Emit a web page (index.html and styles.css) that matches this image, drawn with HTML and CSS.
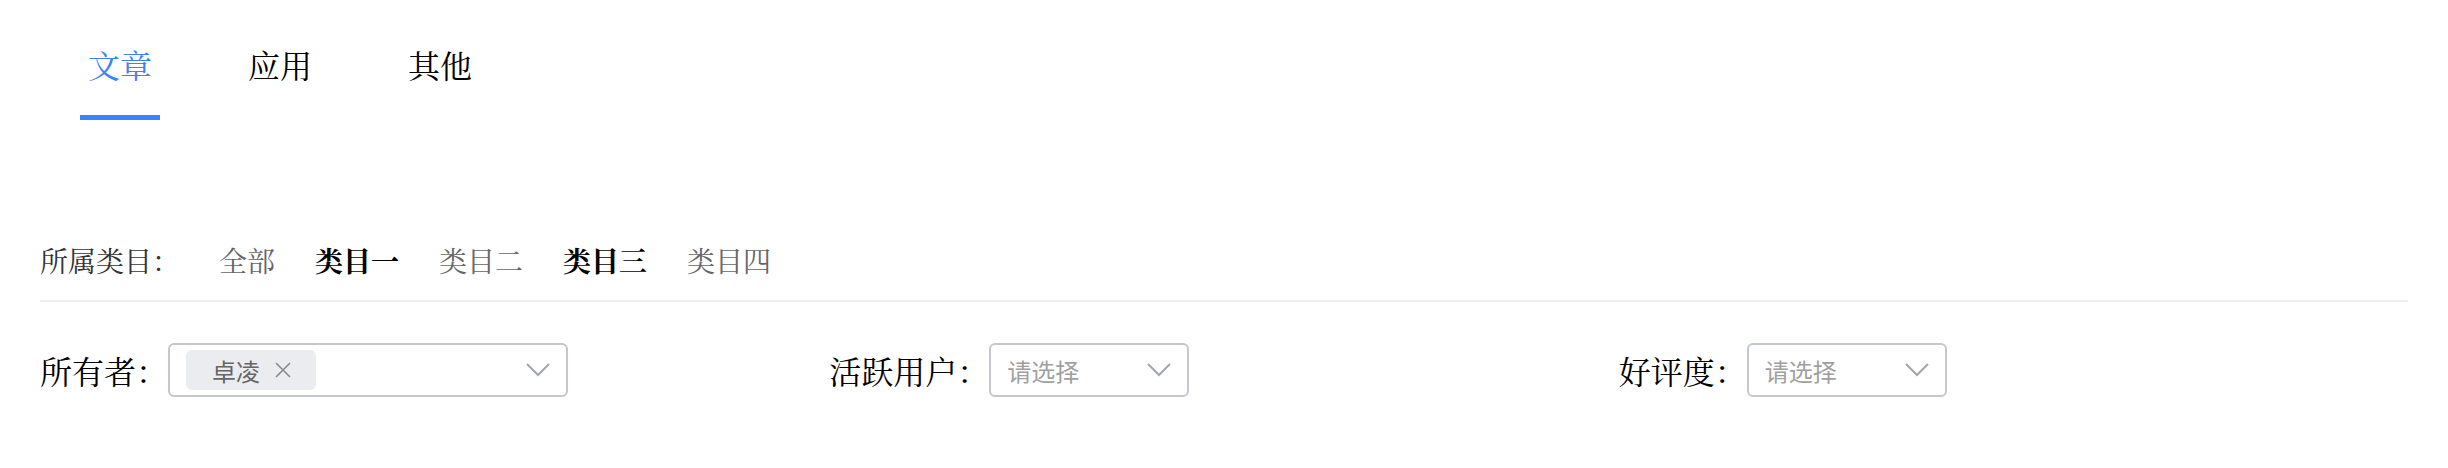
FILE: index.html
```html
<!DOCTYPE html>
<html lang="zh-CN">
<head>
<meta charset="utf-8">
<link rel="stylesheet" href="styles.css">
</head>
<body>
<div class="page">
  <nav class="tabs">
    <div class="tab active"><span class="tab-text">文章</span><span class="tab-bar"></span></div>
    <div class="tab"><span class="tab-text">应用</span><span class="tab-bar"></span></div>
    <div class="tab"><span class="tab-text">其他</span><span class="tab-bar"></span></div>
  </nav>

  <div class="category-row">
    <span class="cat-label">所属类目：</span>
    <span class="cat-item">全部</span>
    <span class="cat-item selected">类目一</span>
    <span class="cat-item">类目二</span>
    <span class="cat-item selected">类目三</span>
    <span class="cat-item">类目四</span>
  </div>

  <div class="form-row">
    <div class="field">
      <span class="field-label">所有者：</span>
      <div class="select wide">
        <span class="tag">卓凌<svg class="tag-close" viewBox="0 0 18 18" width="18" height="18"><path d="M2 2 L16 16 M16 2 L2 16" stroke="#8a8a8a" stroke-width="1.6" fill="none"/></svg></span>
        <svg class="chev" viewBox="0 0 24 14" width="24" height="14"><polyline points="1,1 12,12 23,1" stroke="#a3a6ad" stroke-width="2" fill="none"/></svg>
      </div>
    </div>
    <div class="field">
      <span class="field-label">活跃用户：</span>
      <div class="select narrow">
        <span class="placeholder">请选择</span>
        <svg class="chev" viewBox="0 0 24 14" width="24" height="14"><polyline points="1,1 12,12 23,1" stroke="#a3a6ad" stroke-width="2" fill="none"/></svg>
      </div>
    </div>
    <div class="field">
      <span class="field-label">好评度：</span>
      <div class="select narrow">
        <span class="placeholder">请选择</span>
        <svg class="chev" viewBox="0 0 24 14" width="24" height="14"><polyline points="1,1 12,12 23,1" stroke="#a3a6ad" stroke-width="2" fill="none"/></svg>
      </div>
    </div>
  </div>
</div>
</body>
</html>
```

FILE: styles.css
```css
html, body {
  margin: 0;
  padding: 0;
  background: #ffffff;
}

.page {
  padding: 0 40px;
  font-family: "Noto Serif CJK SC", "Source Han Serif SC", "AR PL UMing CN", "AR PL SungtiL GB", "SimSun", "Songti SC", "Liberation Serif", serif;
  color: #000;
}

.tabs {
  display: flex;
  height: 120px;
}

.tab {
  width: 160px;
  display: flex;
  flex-direction: column;
  align-items: center;
  padding-top: 48px;
  box-sizing: border-box;
}

.tab-text {
  font-size: 32px;
  line-height: 32px;
  color: #000;
}

.tab-bar {
  display: block;
  width: 80px;
  height: 5px;
  margin-top: 35px;
  background: transparent;
}

.tab.active .tab-text {
  color: #3b83f7;
}

.tab.active .tab-bar {
  background: #3683fb;
}

.category-row {
  display: flex;
  align-items: center;
  margin-top: 126px;
  padding-bottom: 26px;
  border-bottom: 2px solid #f0f0f0;
  font-size: 28px;
  line-height: 28px;
}

.cat-label {
  color: #333;
  margin-right: 39px;
}

.cat-item {
  color: #666;
  margin-right: 40px;
}

.cat-item.selected {
  color: #000;
  font-weight: bold;
}

.form-row {
  display: grid;
  grid-template-columns: 1fr 1fr 1fr;
  margin-top: 41px;
}

.field {
  display: flex;
  align-items: center;
}

.field-label {
  font-size: 32px;
  line-height: 32px;
  color: #000;
}

.select {
  box-sizing: border-box;
  height: 54px;
  border: 2px solid #c5c7ce;
  border-radius: 6px;
  display: flex;
  align-items: center;
  padding: 0 16px;
  font-family: "Noto Sans CJK SC", sans-serif;
}

.select.wide { width: 400px; }
.select.narrow { width: 200px; }

.tag {
  display: flex;
  align-items: center;
  height: 40px;
  padding: 0 24px 0 26px;
  background: #ebecef;
  border-radius: 6px;
  font-size: 24px;
  color: #666;
}

.tag-close {
  margin-left: 14px;
}

.placeholder {
  font-size: 24px;
  color: #a0a0a0;
}

.chev {
  margin-left: auto;
}
```
